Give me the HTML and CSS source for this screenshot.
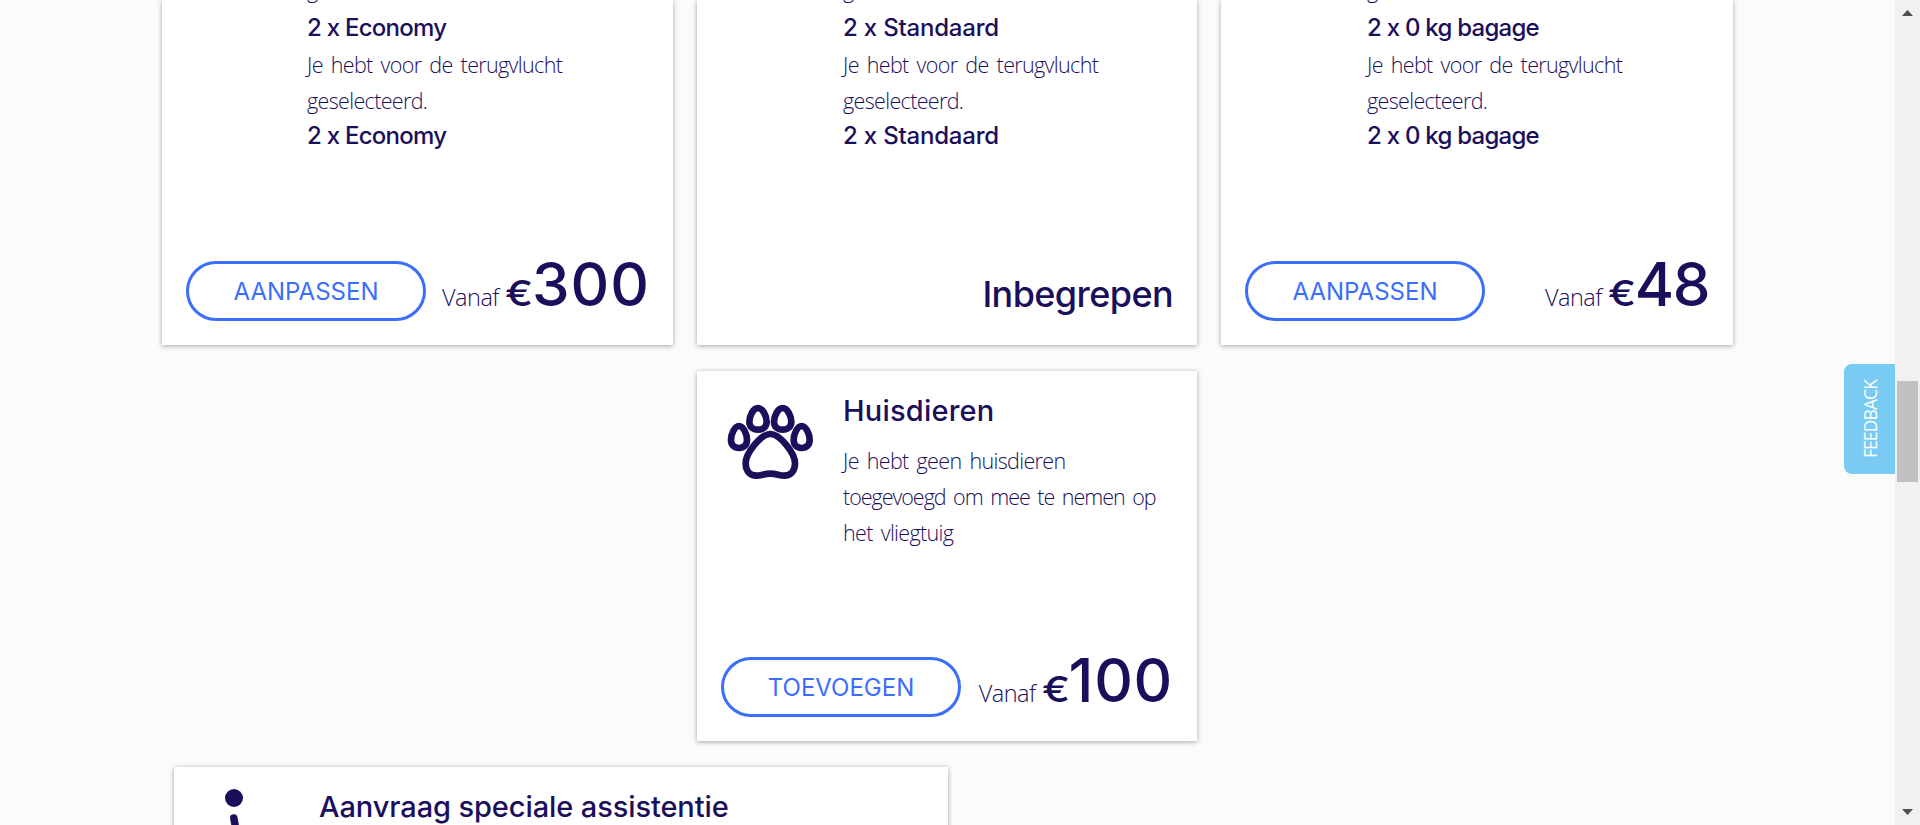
FILE: index.html
```
<!DOCTYPE html>
<html lang="nl">
<head>
<meta charset="utf-8">
<title>Extra's</title>
<link rel="stylesheet" href="styles.css">
</head>
<body>
<div class="page">
  <main class="content">
    <div class="cards">
      <section class="card card-scrolled">
        <div class="text">
          <p>geselecteerd.</p>
          <strong class="economy">2 x Economy</strong>
          <p>Je hebt voor de terugvlucht<br>geselecteerd.</p>
          <strong class="economy">2 x Economy</strong>
        </div>
        <footer class="foot">
          <button class="btn">AANPASSEN</button>
          <div class="price"><span class="from">Vanaf</span><span class="euro">€</span><span class="amount amount-300">300</span></div>
        </footer>
      </section>
      <section class="card card-scrolled">
        <div class="text">
          <p>geselecteerd.</p>
          <strong class="standard">2 x Standaard</strong>
          <p>Je hebt voor de terugvlucht<br>geselecteerd.</p>
          <strong class="standard">2 x Standaard</strong>
        </div>
        <footer class="foot foot-end"><span class="included">Inbegrepen</span></footer>
      </section>
      <section class="card card-scrolled">
        <div class="text">
          <p>geselecteerd.</p>
          <strong class="bags">2 x 0 kg bagage</strong>
          <p>Je hebt voor de terugvlucht<br>geselecteerd.</p>
          <strong class="bags">2 x 0 kg bagage</strong>
        </div>
        <footer class="foot">
          <button class="btn">AANPASSEN</button>
          <div class="price"><span class="from">Vanaf</span><span class="euro">€</span><span class="amount amount-48">48</span></div>
        </footer>
      </section>
      <section class="card card-pets">
        <div class="body">
          <svg class="paw" viewBox="0 0 330 300" fill="none" stroke="#1b0f5b" stroke-width="20">
            <path d="M72 108C85 108 96 132 96 150C96 165 86 174 72 174C58 174 48 165 48 150C48 132 59 108 72 108Z"/>
            <path d="M129 54C143 54 155 78 155 95C155 110 144 119 129 119C114 119 103 110 103 95C103 78 115 54 129 54Z"/>
            <path d="M203 54C217 54 229 78 229 95C229 110 218 119 203 119C188 119 177 110 177 95C177 78 189 54 203 54Z"/>
            <path d="M260 108C273 108 284 132 284 150C284 165 274 174 260 174C246 174 236 165 236 150C236 132 247 108 260 108Z"/>
            <path d="M166 132C195 132 240 190 240 220C240 245 225 257 208 257C192 257 185 251 166 251C147 251 140 257 124 257C107 257 92 245 92 220C92 190 137 132 166 132Z"/>
          </svg>
          <div class="text">
            <h2 class="pets-title">Huisdieren</h2>
            <p>Je hebt geen huisdieren<br><span class="tight">toegevoegd om mee te nemen op</span><br>het vliegtuig</p>
          </div>
        </div>
        <footer class="foot">
          <button class="btn">TOEVOEGEN</button>
          <div class="price"><span class="from">Vanaf</span><span class="euro">€</span><span class="amount amount-100">100</span></div>
        </footer>
      </section>
    </div>
    <section class="card assist">
      <svg class="person" viewBox="0 0 60 60" fill="#1b0f5b" stroke="#1b0f5b">
        <circle cx="30" cy="14" r="9" stroke="none"/>
        <path d="M29.8 34L34 57" stroke-width="7.5" stroke-linecap="round"/>
      </svg>
      <h2>Aanvraag speciale assistentie</h2>
    </section>
  </main>
  <aside class="feedback"><span>FEEDBACK</span></aside>
  <div class="scrollbar">
    <svg class="arrow" viewBox="0 0 11 6"><path d="M0 6L5.5 0L11 6Z" fill="#505050"/></svg>
    <div class="thumb"></div>
    <svg class="arrow arrow-down" viewBox="0 0 11 6"><path d="M0 0H11L5.5 6Z" fill="#505050"/></svg>
  </div>
</div>
</body>
</html>
```
FILE: styles.css
```
* { box-sizing: border-box; }
body {
  margin: 0;
  background: #fbfbfb;
  color: #1b0f5b;
  font-family: Inter, "Liberation Sans", sans-serif;
  font-feature-settings: "calt" 0;
  overflow: hidden;
}
.page { position: relative; height: 825px; overflow: hidden; display: flex; }
.content { flex: 1; padding-left: 162px; min-width: 0; }
.cards {
  display: grid;
  grid-template-columns: 511px 500px 512px;
  grid-template-rows: 345px 370px;
  column-gap: 24px;
  row-gap: 26px;
}
.card { background: #fff; box-shadow: 0 1px 5px rgba(0, 0, 0, .35); }
.card-scrolled, .card-pets {
  display: flex;
  flex-direction: column;
  justify-content: space-between;
  padding: 0 24px 24px;
}
.card-scrolled > .text { margin: -28px 0 0 121px; }
.card-scrolled:nth-child(n+2) > .text { margin-left: 122px; }
.card-scrolled p:first-child { margin-bottom: 3px; }
.card-pets { grid-column: 2; }
.body { display: flex; }
.paw { width: 110px; height: 100px; margin: 19px 0 0 -6px; }
.text { white-space: nowrap; }
.body .text { margin-left: 18px; padding-top: 20px; }
.text p {
  margin: 0;
  font: 300 21.5px/36px "Open Sans", sans-serif;
  letter-spacing: -.65px;
  word-spacing: 3px;
}
.text .tight { letter-spacing: -1.03px; }
.text strong {
  display: block;
  margin: -2px 0 2px;
  font-size: 24px;
  line-height: 37px;
  height: 36px;
  font-weight: 500;
}
.economy { letter-spacing: -.75px; }
.standard { letter-spacing: -.2px; }
.bags { letter-spacing: -.75px; }
h2 { margin: 0; font-size: 29px; line-height: 40px; font-weight: 500; }
.body h2 { margin-bottom: 12px; letter-spacing: .2px; }
.foot { display: flex; justify-content: space-between; height: 60px; }
.foot-end { justify-content: flex-end; }
.btn {
  width: 240px;
  height: 60px;
  padding: 0;
  border: 3px solid #3a6efb;
  border-radius: 30px;
  background: #fff;
  color: #3a6efb;
  font: 400 24px Inter, sans-serif;
}
.price { display: flex; align-items: baseline; margin-top: -7px; white-space: nowrap; }
.from { font: 300 23.5px "Open Sans", sans-serif; letter-spacing: -.5px; margin-right: 6px; }
.euro {
  width: 27px;
  font-size: 36px;
  font-weight: 500;
  transform: scaleX(1.16);
  transform-origin: left;
}
.amount { font-size: 60px; line-height: 60px; font-weight: 500; }
.amount-300 { letter-spacing: 1px; margin-right: -1px; }
.amount-48 { letter-spacing: -1.5px; }
.amount-100 { letter-spacing: .7px; }
.included { font-size: 36px; line-height: 66px; font-weight: 500; letter-spacing: -.6px; }
.assist { display: flex; width: 774px; height: 200px; margin: 26px 0 0 12px; }
.person { width: 60px; height: 60px; margin: 17px 55px 0 30px; }
.assist h2 { padding-top: 20px; white-space: nowrap; letter-spacing: -.1px; }
.feedback {
  position: absolute;
  left: 1844px;
  top: 364px;
  width: 51px;
  height: 110px;
  border-radius: 8px 0 0 8px;
  background: #7acbf4;
  color: #fff;
  display: flex;
  align-items: center;
  justify-content: center;
  font: 17.5px "Open Sans", sans-serif;
  letter-spacing: -.9px;
}
.feedback span { writing-mode: vertical-rl; transform: rotate(180deg); }
.scrollbar {
  width: 25px;
  background: #f1f1f1;
  display: flex;
  flex-direction: column;
  align-items: center;
  padding: 10px 0;
}
.arrow { width: 11px; height: 6px; }
.thumb { width: 21px; height: 101px; margin-top: 365px; background: #c1c1c1; }
.arrow-down { margin-top: auto; }
```
